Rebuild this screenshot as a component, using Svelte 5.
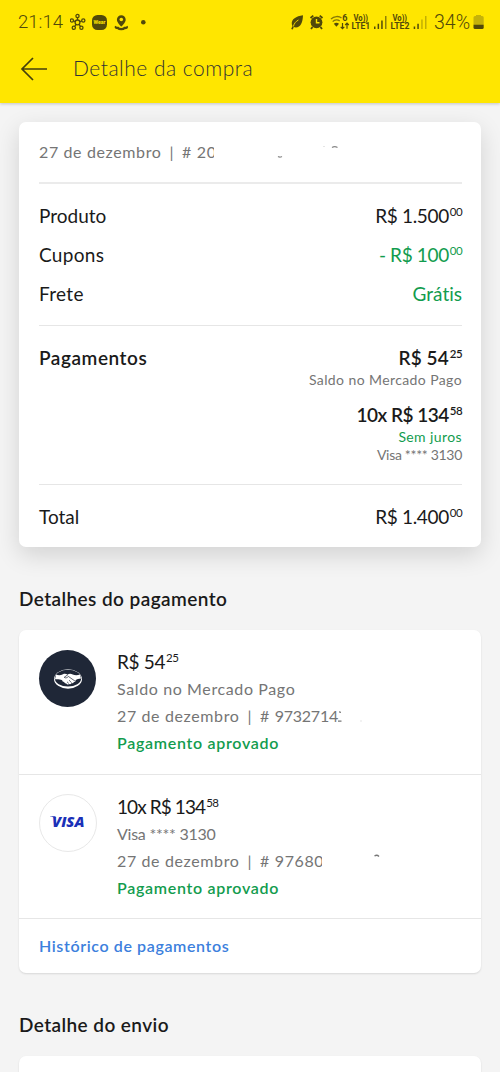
<script>
  const payments = [
    { logo: "mp", price: "R$ 54", cents: "25", method: "Saldo no Mercado Pago", number: "9732714" },
    { logo: "visa", price: "10x R$ 134", cents: "58", method: "Visa **** 3130", number: "97680" }
  ];
</script>

<div class="page">
  <header>
    <div class="status">
      <span class="time">21:14</span>
      <svg class="left-icons" width="80" height="20" viewBox="0 0 80 20" fill="none" stroke="#51490a" stroke-width="1.3">
        <circle cx="7.5" cy="10.4" r="2.4" />
        <circle cx="7.5" cy="4" r="1.6" />
        <circle cx="1.9" cy="8.5" r="1.6" />
        <circle cx="13.3" cy="8.5" r="1.6" />
        <circle cx="3.8" cy="15.8" r="1.6" />
        <circle cx="11.4" cy="15.8" r="1.6" />
        <path d="M7.5 5.500v2.500M3.500 9l2 .7M11.800 9l-2 .7M4.800 14.400l1.300-2M10.400 14.400l-1.300-2" />
        <rect x="22" y="3" width="15" height="15" rx="5.5" fill="#51490a" stroke="none" />
        <text x="29.5" y="12.4" class="wear" text-anchor="middle" textLength="12" lengthAdjust="spacingAndGlyphs">Wear</text>
        <path d="M51.3 3.3a4.4 4.4 0 0 0-4.4 4.4c0 3 4.4 6.8 4.4 6.8s4.4-3.8 4.4-6.8a4.4 4.4 0 0 0-4.4-4.4z" fill="#51490a" stroke="none" />
        <circle cx="51.3" cy="7.5" r="1.8" fill="#ffe600" stroke="none" />
        <path d="M46 14.3c-.8 1.500.5 1.700 2 1.700 1.200 1.600 5.300 1.600 6.500 0 1.700.1 3-.3 2-1.700" stroke-width="2.3" />
        <circle cx="73.3" cy="10.3" r="2.3" fill="#51490a" stroke="none" />
      </svg>
      <svg class="right-icons" width="146" height="20" viewBox="0 0 146 20" fill="#51490a">
        <path d="M13 3.2C6 4.2 1.300 7 1.800 12c.1 1 .4 1.600.7 2L1.200 17l1.600.4 1-2.300c6.300 1.600 8.900-3.900 9.200-11.900z" />
        <path d="M3.4 14.500c.7-3.200 2.400-5 5-6.500" stroke="#ffe600" stroke-width=".9" fill="none" />
        <circle cx="26.5" cy="10.3" r="5.9" />
        <path d="M20.5 6l2.800-2.400M32.500 6l-2.800-2.400M22.500 15l-1.500 2M30.500 15l1.500 2" stroke="#51490a" stroke-width="1.8" />
        <path d="M26.500 7v3.800h3" stroke="#ffe600" stroke-width="1.4" fill="none" />
        <path d="M41 7c3-3 8-3.200 10.500-1M42.700 9.600c2-2.200 5.200-2.200 7-.6" stroke="#51490a" stroke-width="1.3" fill="none" opacity=".7" />
        <path d="M43.800 11.700a4.500 4.500 0 0 1 5.200 0l-2.600 3.100z" />
        <text x="52.3" y="9" class="net" textLength="5">6</text>
        <path d="M52.500 11v5.500M50.700 14.800l1.800 1.800 1.800-1.800M57 16.800v-5.500M55.200 13l1.800-1.800 1.800 1.800" stroke="#51490a" stroke-width="1.2" fill="none" />
        <text x="63.5" y="8.900" class="net" textLength="14.5" lengthAdjust="spacingAndGlyphs">Vo))</text>
        <text x="61.5" y="17.200" class="net" textLength="18.5" lengthAdjust="spacingAndGlyphs">LTE1</text>
        <path d="M84 14.500h1.500V17H84zM87.600 11.800h1.500V17h-1.500zM91.200 8.400h1.500V17h-1.500z" />
        <path d="M95 4h1.500v13H95z" opacity=".65" />
        <text x="102.5" y="8.900" class="net" textLength="14.5" lengthAdjust="spacingAndGlyphs">Vo))</text>
        <text x="100.5" y="17.200" class="net" textLength="19" lengthAdjust="spacingAndGlyphs">LTE2</text>
        <path d="M123.700 14.500h1.500V17h-1.500zM127.300 11.800h1.500V17h-1.500z" />
        <path d="M131.200 7.400h1.500V17h-1.500zM135 4h1.500v13H135z" opacity=".35" />
      </svg>
      <span class="percent">34%</span>
      <svg class="battery" width="11" height="16" viewBox="0 0 11 16">
        <path d="M3 1h5v1h1.200a1.500 1.500 0 0 1 1.500 1.500V10H.5V3.500A1.500 1.500 0 0 1 2 2h1z" fill="#c5b20a" />
        <path d="M.5 10.500h10.200v3a1.500 1.500 0 0 1-1.500 1.500H2A1.500 1.500 0 0 1 .5 13.500z" fill="#51490a" />
      </svg>
    </div>
    <div class="bar">
      <svg width="28" height="24" viewBox="0 0 28 24" fill="none" stroke="#45400c" stroke-width="1.7">
        <path d="M27 12H2M13 1L2 12l11 11" />
      </svg>
      <h1>Detalhe da compra</h1>
    </div>
  </header>

  <main>
    <section class="card summary">
      <div class="order">
        <span class="meta">27 de dezembro<i>|</i># 2<span class="erased">0</span></span>
        <svg class="rest" width="124" height="20" viewBox="0 0 124 20" fill="none" stroke="#888" stroke-width="1.2">
          <path d="M61 14.5q1.800 1.200 4 0" />
          <path d="M115 5.500q2.700-1.800 5.500 0" />
          <path d="M106 4.500h2" stroke="#e5e5e5" />
        </svg>
      </div>
      <div class="lines">
        <div class="line"><span>Produto</span><span class="price">R$ 1.500<sup>00</sup></span></div>
        <div class="line"><span class="spaced">Cupons</span><span class="price green">- R$ 100<sup>00</sup></span></div>
        <div class="line"><span class="spaced">Frete</span><span class="green">Grátis</span></div>
      </div>
      <div class="methods">
        <strong class="label">Pagamentos</strong>
        <div class="amounts">
          <strong class="price first">R$ 54<sup>25</sup></strong>
          <small>Saldo no Mercado Pago</small>
          <strong class="price second">10x R$ 134<sup>58</sup></strong>
          <small class="green">Sem juros</small>
          <small class="tight">Visa **** 3130</small>
        </div>
      </div>
      <div class="line total"><span>Total</span><span class="price">R$ 1.400<sup>00</sup></span></div>
    </section>

    <h2>Detalhes do pagamento</h2>

    <section class="card details">
      {#each payments as payment}
        <article>
          <div class="logo {payment.logo}">
            {#if payment.logo === "mp"}
              <svg width="30" height="22" viewBox="0 0 30 22">
                <ellipse cx="15" cy="11" rx="14" ry="9.7" fill="#fff" />
                <ellipse cx="15" cy="10.2" rx="13.2" ry="8.4" fill="#1f2737" />
                <path d="M3 6.500c2.500 1 4.700.8 7-.3 1.700-.8 3-.4 4.500.3 2-.9 3.500-.8 5.200 0 2.300.9 4.800.9 7.300 0l1 4c-2.200.2-4 .7-5.500 1.700.3 1.200-.7 2-1.700 1.700-.2 1.100-1.200 1.600-2 1.200-.6 1.100-1.600 1.400-2.500.9-1 .8-2.500.5-2.900-.6-1.300.2-2-.4-2.200-1.400-1.300 0-1.900-.7-2-1.700-2-.9-4-1.200-7.200-1z" fill="#fff" />
                <path d="M15 6.600L11.200 9.300c1.300 1.200 2.900.4 4.300-.8l6.500 4.600M16 12.200l2.600 2.500M14 13.800l1.800 1.700" fill="none" stroke="#1f2737" stroke-width=".7" />
              </svg>
            {:else}
              <svg width="40" height="22" viewBox="0 0 40 22">
                <path d="M2 4.300h5.500v2.300C6.500 5.500 4.700 4.900 2 4.600z" fill="#1a30b8" />
                <text x="4" y="15.400" textLength="32.5" lengthAdjust="spacingAndGlyphs">VISA</text>
              </svg>
            {/if}
          </div>
          <div class="info">
            <div class="price" class:installments={payment.logo === "visa"}>{payment.price}<sup>{payment.cents}</sup></div>
            <div class="meta" class:tight={payment.logo === "visa"}>{payment.method}</div>
            <div class="meta">
              27 de dezembro<i>|</i>#
              {#if payment.logo === "mp"}
                <span class="number">{payment.number}</span><svg class="rest" width="26" height="20" viewBox="0 0 26 20" fill="#777">
                  <path d="M-.5 18.500h4v1.200h-4zM1 9.300l2 .5v1.200l-2-.6z" />
                  <path d="M22 18.500h2v1h-2z" fill="#e5e5e5" />
                </svg>
              {:else}
                {payment.number.slice(0, -1)}<span class="erased">0</span>
                <svg class="rest" width="58" height="20" viewBox="0 0 58 20" fill="none" stroke="#777" stroke-width="1.3">
                  <path d="M45.500 9q2.500-1.700 4.500.5" />
                </svg>
              {/if}
            </div>
            <strong class="approved">Pagamento aprovado</strong>
          </div>
        </article>
      {/each}
      <a href="#historico">Histórico de pagamentos</a>
    </section>

    <h2>Detalhe do envio</h2>
    <section class="card next"></section>
  </main>
</div>

<style>
  :global(body) {
    margin: 0;
    background: #f4f4f4;
    overflow: hidden;
  }

  .page {
    width: 500px;
    height: 1072px;
    overflow: hidden;
    background: #f4f4f4;
    color: #1a1a1a;
    font-family: Lato, "Open Sans", sans-serif;
    font-variant-ligatures: none;
  }

  header {
    height: 103px;
    background: #ffe600;
    box-shadow: 0 1px 3px rgba(0, 0, 0, 0.2);
  }

  .status {
    display: flex;
    align-items: center;
    height: 44px;
    padding: 0 16px 0 18px;
    color: #51490a;
    font-family: Roboto, sans-serif;
    font-size: 18.5px;
    font-weight: 300;
  }

  .time {
    width: 52px;
  }

  .wear {
    fill: #ffe600;
    stroke: none;
    font: 700 5.5px Roboto, sans-serif;
  }

  .net {
    font: 700 9px Roboto, sans-serif;
  }

  .right-icons {
    margin-left: auto;
  }

  .percent {
    width: 39px;
    margin-left: -2px;
    font-size: 19.5px;
  }

  .bar {
    display: flex;
    align-items: center;
    height: 50px;
    padding-left: 20px;
  }

  h1 {
    margin: -3px 0 0 25px;
    font-size: 21px;
    font-weight: 300;
    letter-spacing: 0.5px;
    color: #333;
  }

  main {
    padding: 19px 19px 0;
  }

  .card {
    background: #fff;
    border-radius: 7px;
    box-shadow: 0 1px 2px rgba(0, 0, 0, 0.12);
  }

  .summary {
    height: 425px;
    padding: 0 19px 0 20px;
    box-sizing: border-box;
    box-shadow: 0 8px 24px rgba(0, 0, 0, 0.14);
  }

  .order {
    display: flex;
    align-items: center;
    height: 60px;
    border-bottom: 2px solid #ebebeb;
  }

  .order .meta {
    margin-top: -2px;
  }

  .order i {
    margin: 0 9px;
  }

  .meta {
    font-size: 16px;
    letter-spacing: 0.62px;
    color: #757575;
  }

  .meta.tight {
    letter-spacing: -0.25px;
  }

  .meta i {
    margin: 0 8px;
    font-style: normal;
  }

  .number {
    letter-spacing: -0.25px;
  }

  /* hides the right edge of a digit */
  .erased {
    position: relative;
  }

  .erased::after {
    content: "";
    position: absolute;
    top: 0;
    right: 0;
    width: 2.5px;
    height: 100%;
    background: #fff;
  }

  .rest {
    vertical-align: top;
  }

  .lines {
    height: 142px;
    padding-top: 12px;
    box-sizing: border-box;
    border-bottom: 1px solid #e6e6e6;
  }

  .line {
    display: flex;
    justify-content: space-between;
    height: 39px;
    font-size: 19px;
    line-height: 39px;
  }

  .spaced {
    letter-spacing: 0.3px;
  }

  .price {
    font-size: 19px;
    letter-spacing: -0.35px;
  }

  .price.installments {
    letter-spacing: -0.9px;
  }

  sup {
    margin-left: 1px;
    font-size: 11.5px;
    line-height: 0;
    vertical-align: 7px;
    letter-spacing: -0.6px;
  }

  .green {
    color: #129c4e;
  }

  strong {
    font-weight: 600;
  }

  .methods {
    display: flex;
    justify-content: space-between;
    height: 159px;
    padding-top: 20px;
    box-sizing: border-box;
    border-bottom: 1px solid #e6e6e6;
  }

  .label {
    font-size: 19px;
    line-height: 24px;
    letter-spacing: 0.55px;
  }

  .amounts {
    display: flex;
    flex-direction: column;
    align-items: flex-end;
    line-height: 24px;
  }

  .amounts .first {
    letter-spacing: 0.1px;
  }

  .amounts .second {
    margin-top: 14px;
    letter-spacing: -0.5px;
  }

  small {
    margin-top: 1px;
    font-size: 14px;
    line-height: 18px;
    letter-spacing: 0.4px;
    color: #757575;
  }

  small.tight {
    margin-top: 0;
    letter-spacing: -0.3px;
  }

  small.green {
    color: #129c4e;
  }

  .total {
    margin-top: 12px;
  }

  h2 {
    margin: 39px 0 19px;
    font-size: 19px;
    font-weight: 600;
    line-height: 25px;
    letter-spacing: 0.42px;
  }

  article {
    display: flex;
    height: 145px;
    padding: 20px 20px 0;
    box-sizing: border-box;
    border-bottom: 1px solid #e6e6e6;
  }

  article + article {
    height: 144px;
  }

  .logo {
    display: flex;
    align-items: center;
    justify-content: center;
    width: 58px;
    height: 58px;
    box-sizing: border-box;
    border-radius: 50%;
  }

  .logo.mp {
    width: 57px;
    height: 57px;
    margin-right: 1px;
    background: #1f2737;
  }

  .logo.visa {
    margin-top: -1px;
    border: 1px solid #e8e8e8;
  }

  .logo text {
    fill: #1a30b8;
    font: italic 800 14.5px "Open Sans", sans-serif;
  }

  .info {
    margin-left: 20px;
    line-height: 27px;
  }

  .info .price {
    height: 27px;
    margin-top: -2px;
  }

  .approved {
    display: block;
    font-size: 16px;
    letter-spacing: 0.7px;
    color: #129c4e;
  }

  a {
    display: block;
    padding-left: 20px;
    font-size: 16px;
    font-weight: 600;
    line-height: 54px;
    letter-spacing: 0.62px;
    color: #3c80dd;
    text-decoration: none;
  }

  .next {
    height: 60px;
  }
</style>
